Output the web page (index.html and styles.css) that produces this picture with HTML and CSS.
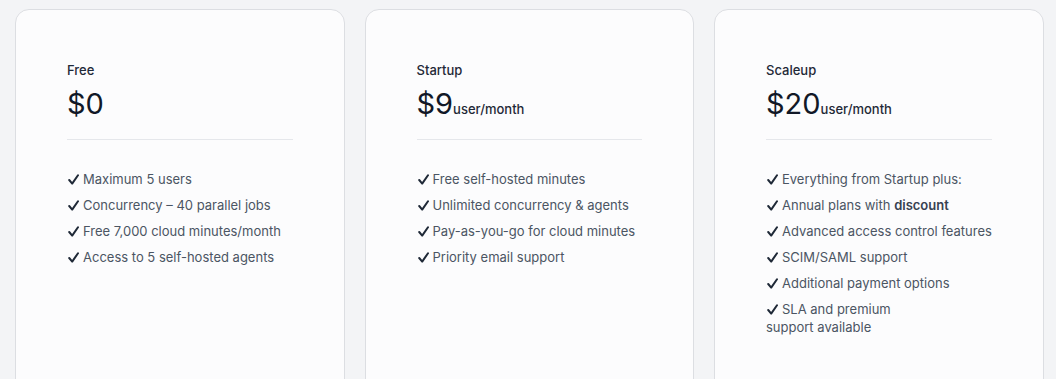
FILE: index.html
```html
<!DOCTYPE html>
<html lang="en">
<head>
    <meta charset="UTF-8">
    <meta name="viewport" content="width=device-width, initial-scale=1.0">
    <title>Pricing</title>
    <link rel="stylesheet" href="styles.css">
</head>
<body>
    <div class="plans">
        <div class="plan">
            <div class="plan-name">Free</div>
            <div class="plan-price">$0</div>
            <ul class="features">
                <li><svg class="tick" viewBox="0 0 11 11"><path d="M1.2 6 L4.2 9.6 L10 1.2"/></svg>Maximum 5 users</li>
                <li><svg class="tick" viewBox="0 0 11 11"><path d="M1.2 6 L4.2 9.6 L10 1.2"/></svg>Concurrency – 40 parallel jobs</li>
                <li><svg class="tick" viewBox="0 0 11 11"><path d="M1.2 6 L4.2 9.6 L10 1.2"/></svg>Free 7,000 cloud minutes/month</li>
                <li><svg class="tick" viewBox="0 0 11 11"><path d="M1.2 6 L4.2 9.6 L10 1.2"/></svg>Access to 5 self-hosted agents</li>
            </ul>
        </div>
        <div class="plan">
            <div class="plan-name">Startup</div>
            <div class="plan-price">$9<span class="per">user/month</span></div>
            <ul class="features">
                <li><svg class="tick" viewBox="0 0 11 11"><path d="M1.2 6 L4.2 9.6 L10 1.2"/></svg>Free self-hosted minutes</li>
                <li><svg class="tick" viewBox="0 0 11 11"><path d="M1.2 6 L4.2 9.6 L10 1.2"/></svg>Unlimited concurrency &amp; agents</li>
                <li><svg class="tick" viewBox="0 0 11 11"><path d="M1.2 6 L4.2 9.6 L10 1.2"/></svg>Pay-as-you-go for cloud minutes</li>
                <li><svg class="tick" viewBox="0 0 11 11"><path d="M1.2 6 L4.2 9.6 L10 1.2"/></svg>Priority email support</li>
            </ul>
        </div>
        <div class="plan">
            <div class="plan-name">Scaleup</div>
            <div class="plan-price">$20<span class="per">user/month</span></div>
            <ul class="features">
                <li><svg class="tick" viewBox="0 0 11 11"><path d="M1.2 6 L4.2 9.6 L10 1.2"/></svg>Everything from Startup plus:</li>
                <li><svg class="tick" viewBox="0 0 11 11"><path d="M1.2 6 L4.2 9.6 L10 1.2"/></svg>Annual plans with <b>discount</b></li>
                <li><svg class="tick" viewBox="0 0 11 11"><path d="M1.2 6 L4.2 9.6 L10 1.2"/></svg>Advanced access control features</li>
                <li><svg class="tick" viewBox="0 0 11 11"><path d="M1.2 6 L4.2 9.6 L10 1.2"/></svg>SCIM/SAML support</li>
                <li><svg class="tick" viewBox="0 0 11 11"><path d="M1.2 6 L4.2 9.6 L10 1.2"/></svg>Additional payment options</li>
                <li><svg class="tick" viewBox="0 0 11 11"><path d="M1.2 6 L4.2 9.6 L10 1.2"/></svg>SLA and premium<br>support available</li>
            </ul>
        </div>
    </div>
</body>
</html>
```

FILE: styles.css
```css
/* pricing cards */
body {
    margin: 0;
    padding: 9px 0 0 15px;
    background-color: #f3f4f6;
    font-family: Inter, "Noto Sans", sans-serif;
    color: #111827;
}
.plans {
    display: flex;
    gap: 20px;
}
.plan {
    width: 329.5px;
    min-height: 420px;
    box-sizing: border-box;
    padding: 51px 51px;
    background-color: #fcfcfd;
    border: 1px solid #dcdee2;
    border-radius: 14px;
}
.plan-name {
    font-size: 13px;
    font-weight: 500;
    line-height: 18px;
    color: #1f2937;
}
.plan-price {
    margin-top: 6px;
    padding-bottom: 16px;
    border-bottom: 1px solid #e5e7eb;
    font-size: 29px;
    line-height: 38px;
    color: #111827;
}
.per {
    font-size: 13px;
    font-weight: 500;
    line-height: 1;
    color: #1f2937;
}
.features {
    list-style: none;
    margin: 30px 0 0;
    padding: 0;
}
.features li {
    font-size: 13px;
    line-height: 18px;
    color: #4b5563;
    margin-bottom: 8px;
    white-space: nowrap;
}
.features b {
    font-weight: 600;
    color: #374151;
}
.tick {
    width: 11px;
    height: 11px;
    margin: 0 4px -1px 1px;
    fill: none;
    stroke: #1f2937;
    stroke-width: 2;
    stroke-linecap: round;
    stroke-linejoin: round;
}
```
